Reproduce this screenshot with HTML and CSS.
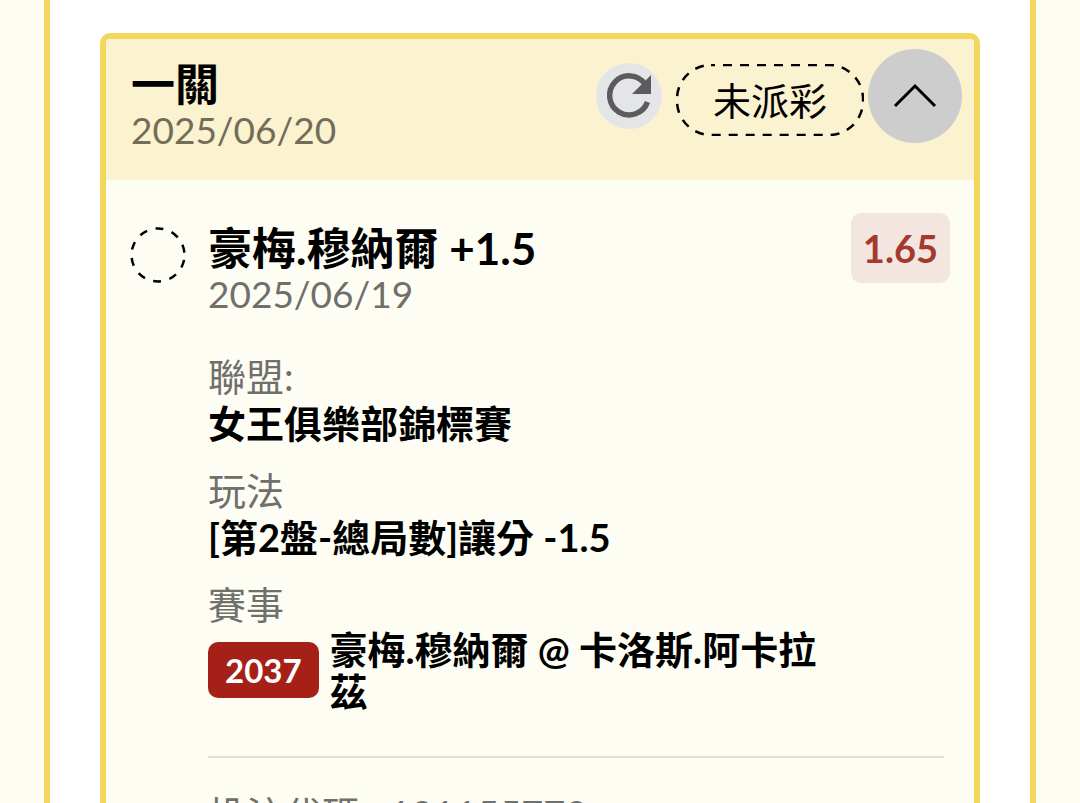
FILE: index.html
```html
<!DOCTYPE html>
<html lang="zh-Hant">
<head>
    <meta charset="UTF-8">
    <meta name="viewport" content="width=device-width, initial-scale=1.0">
    <title>一關</title>
    <link rel="stylesheet" href="styles.css">
</head>
<body>
    <main class="panel">
        <article class="ticket">
            <header class="ticket-header">
                <div class="heading">
                    <h1 class="title">一關</h1>
                    <time class="date" datetime="2025-06-20">2025/06/20</time>
                </div>
                <div class="actions">
                    <button class="refresh" type="button" aria-label="重新整理">
                        <svg viewBox="0 0 66 66" aria-hidden="true">
                            <path d="M49 21A19.500 19.500 0 1 0 51.500 39" fill="none" stroke="#5c5c5e" stroke-width="5.500"/>
                            <path d="M55 12v19H36z" fill="#5c5c5e"/>
                        </svg>
                    </button>
                    <span class="status">
                        <svg class="outline" aria-hidden="true">
                            <rect class="dash" x="1" y="1" rx="34"/>
                        </svg>
                        未派彩
                    </span>
                    <button class="toggle" type="button" aria-label="收合" aria-expanded="true">
                        <svg viewBox="0 0 94 94" aria-hidden="true">
                            <path d="M27 57L47 37L67 57" fill="none" stroke="#000" stroke-width="3"/>
                        </svg>
                    </button>
                </div>
            </header>
            <section class="bet">
                <svg class="marker" viewBox="0 0 56 56" aria-hidden="true">
                    <circle cx="28" cy="28" r="26.500" fill="none" stroke="#000" stroke-width="2.500" stroke-dasharray="8 8.650" stroke-dashoffset="-5"/>
                </svg>
                <div class="details">
                    <div class="pick">
                        <div class="heading">
                            <h2 class="title">豪梅.穆納爾 +1.5</h2>
                            <time class="date" datetime="2025-06-19">2025/06/19</time>
                        </div>
                        <span class="odds">1.65</span>
                    </div>
                    <dl class="info">
                        <div class="info-item">
                            <dt>聯盟:</dt>
                            <dd>女王俱樂部錦標賽</dd>
                        </div>
                        <div class="info-item">
                            <dt>玩法</dt>
                            <dd>[第2盤-總局數]讓分 -1.5</dd>
                        </div>
                        <div class="info-item">
                            <dt>賽事</dt>
                            <dd class="match">
                                <span class="match-id">2037</span>
                                <span class="teams">豪梅.穆納爾 @ 卡洛斯.阿卡拉茲</span>
                            </dd>
                        </div>
                    </dl>
                    <p class="code">投注代碼 : 121155772</p>
                </div>
            </section>
        </article>
    </main>
</body>
</html>
```

FILE: styles.css
```css
* {
    box-sizing: border-box;
}
body, html {
    margin: 0;
    padding: 0;
    height: 100%;
}
body {
    padding: 0 44px;
    background: #fefdf4;
    font-family: Lato, 'Noto Sans CJK TC', sans-serif;
    font-size: 38px;
    line-height: 46px;
    color: #000;
    overflow: hidden;
}
h1, h2, p, dl, dd {
    margin: 0;
}
button {
    padding: 0;
    border: none;
    border-radius: 50%;
    cursor: pointer;
}
svg {
    display: block;
}
.panel {
    min-height: 100%;
    padding: 33px 50px;
    background: #fff;
    border: solid #f3d75c;
    border-width: 0 6px;
}
.ticket {
    background: #fefdf4;
    border: 6px solid #f3d75c;
    border-radius: 10px;
    overflow: hidden;
}
.ticket-header {
    display: flex;
    justify-content: space-between;
    align-items: flex-start;
    padding: 10px 12px 27px 25px;
    background: #fbf2d0;
}
.heading {
    display: flex;
    flex-direction: column;
    padding-top: 12px;
}
.title {
    font-size: 44px;
    line-height: 46px;
    font-weight: 700;
}
.date {
    font-size: 37px;
    line-height: 46px;
    color: #6f6f6b;
}
.ticket-header .date {
    color: #736d58;
}
.actions {
    display: flex;
    align-items: center;
    gap: 4px;
}
.refresh {
    width: 66px;
    height: 66px;
    margin-right: 10px;
    background: #e4e5e7;
}
.status {
    position: relative;
    margin-top: 8px;
    padding: 13px 37px;
}
.outline {
    position: absolute;
    top: 0;
    left: 0;
    width: 100%;
    height: 100%;
}
.dash {
    width: calc(100% - 2px);
    height: calc(100% - 2px);
    fill: none;
    stroke: #000;
    stroke-width: 2.5;
    stroke-dasharray: 9 8;
    stroke-dashoffset: 5;
}
.toggle {
    width: 94px;
    height: 94px;
    background: #cecdce;
}
.bet {
    display: flex;
    align-items: flex-start;
    gap: 22px;
    padding: 33px 24px 0;
}
.marker {
    flex: none;
    width: 56px;
    height: 56px;
    margin-top: 14px;
}
.details {
    flex: 1;
}
.pick {
    display: flex;
    justify-content: space-between;
    align-items: flex-start;
}
.odds {
    padding: 12px;
    border-radius: 10px;
    background: #f3e6e0;
    color: #a6382c;
    font-weight: 700;
}
.info {
    margin-right: 6px;
    padding: 35px 0 44px;
    border-bottom: 2px solid #dfdfd8;
}
.info-item + .info-item {
    margin-top: 20px;
}
.info dt {
    line-height: 48px;
    color: #6f6f6b;
}
.info dd {
    font-weight: 700;
}
.match {
    display: flex;
    align-items: center;
    gap: 11px;
    padding-right: 110px;
}
.match-id {
    flex: none;
    padding: 5px 17px;
    border-radius: 10px;
    background: #a52117;
    color: #fff;
    font-size: 33px;
}
.teams {
    line-height: 42px;
}
.code {
    padding-top: 33px;
    color: #6f6f6b;
}
```
